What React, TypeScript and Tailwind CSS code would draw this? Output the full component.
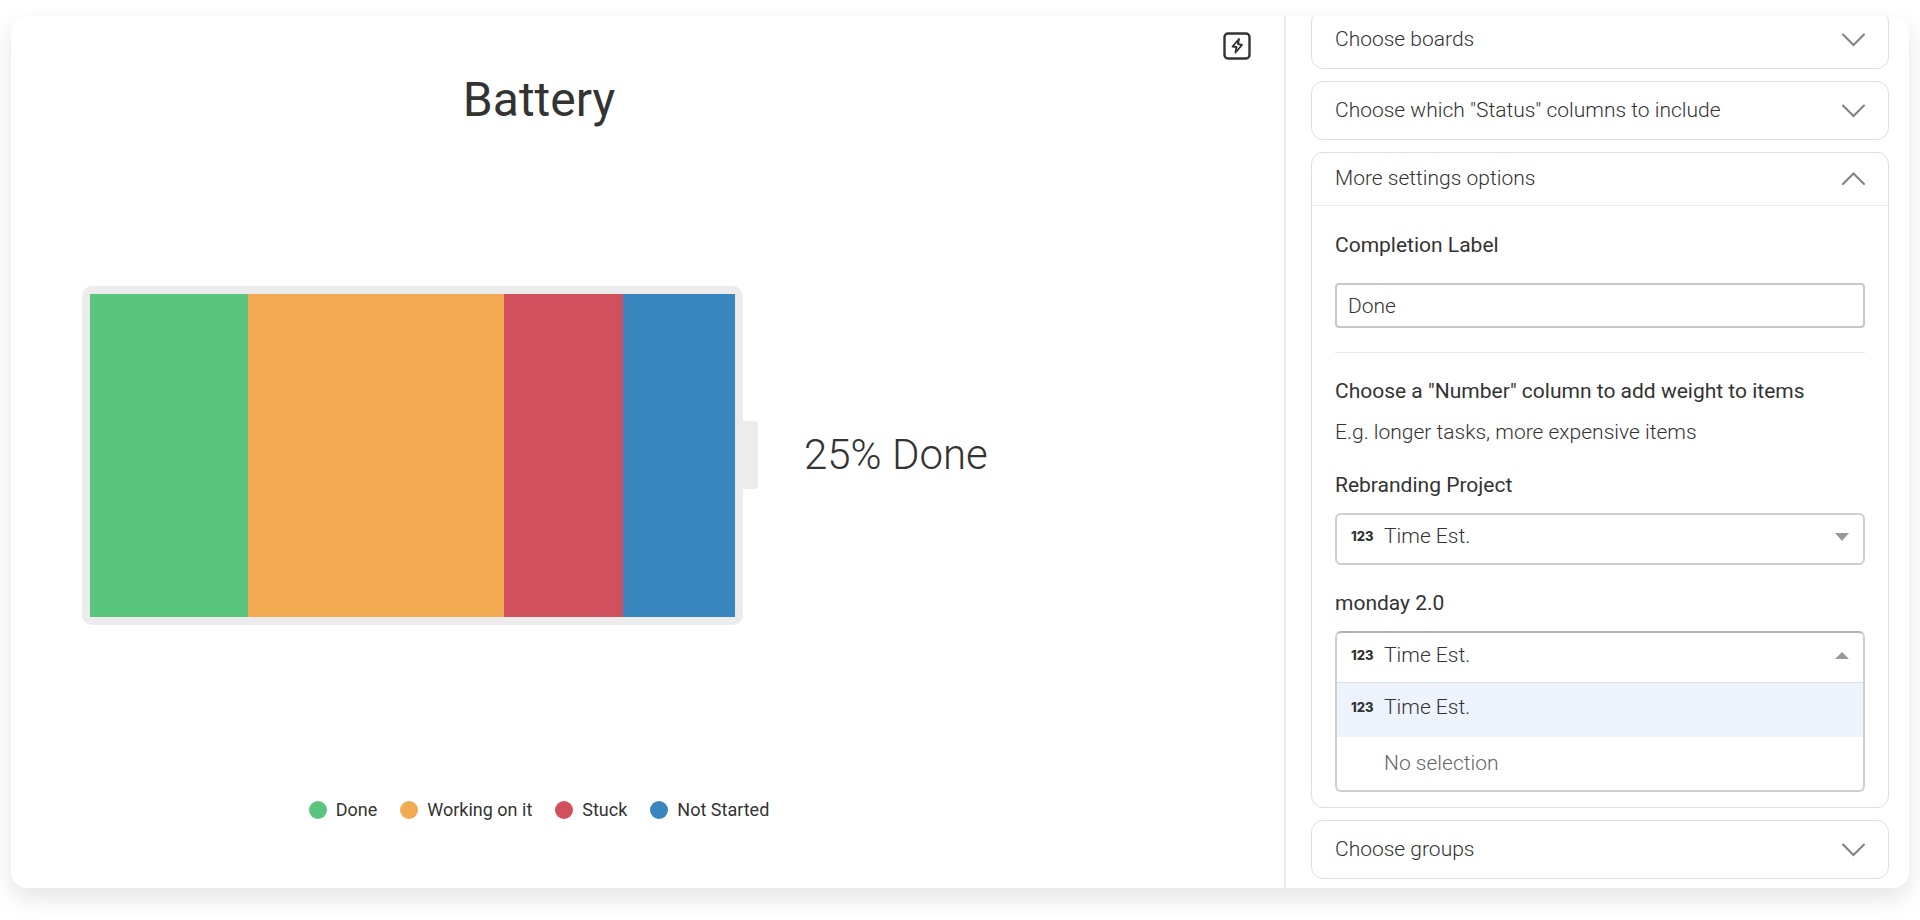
import { useState } from 'react';

const statuses = [
  { label: 'Done', weight: 158, color: 'bg-[#5ac57d]' },
  { label: 'Working on it', weight: 257, color: 'bg-[#f2ab53]' },
  { label: 'Stuck', weight: 119, color: 'bg-[#d0505d]' },
  { label: 'Not Started', weight: 112, color: 'bg-[#3985bd]' },
];

function Chevron({ up = false }: { up?: boolean }) {
  return (
    <svg className="h-4 w-6" viewBox="0 0 24 16" fill="none" stroke="#808080" strokeWidth="2" strokeLinecap="round">
      {up ? <path d="M2 13 12.500 2.500 23 13" /> : <path d="M2 2.500 12.500 13 23 2.500" />}
    </svg>
  );
}

function Caret({ up = false }: { up?: boolean }) {
  return (
    <svg className="h-2 w-[14px]" viewBox="0 0 14 8" fill="#999">
      {up ? <path d="M0 7h14L7 0z" /> : <path d="M0 0h14L7 8z" />}
    </svg>
  );
}

function Section({ title }: { title: string }) {
  return (
    <section className="shrink-0 rounded-xl border border-[#dedee9]">
      <button type="button" className="flex h-[57px] w-full items-center justify-between px-[23px] pt-px text-left">
        {title}
        <Chevron />
      </button>
    </section>
  );
}

function ColumnValue() {
  return (
    <span className="flex items-center text-left">
      <span className="w-[33px] font-[Inter] text-[13px] font-extrabold text-[#333]">123</span>
      Time Est.
    </span>
  );
}

export default function App() {
  const [label, setLabel] = useState('Done');

  return (
    <div className="h-screen bg-white px-[11px] pt-4 pb-8 font-[Roboto,sans-serif] text-[21px] font-light text-[#333]">
      <div className="flex h-full overflow-hidden rounded-2xl bg-white shadow-[0_10px_24px_rgba(0,0,0,0.11)]">
        <main className="flex flex-1 flex-col pl-[71px]">
          <div className="flex h-[60px] shrink-0 justify-end pt-4 pr-[33px]">
            <button type="button" aria-label="Automations" className="h-7 w-7">
              <svg viewBox="0 0 28 28" fill="none" stroke="#333" strokeWidth="2.400" strokeLinejoin="round">
                <rect x="1.500" y="1.500" width="25" height="25" rx="3.500" />
                <path d="M16 7 9.500 14.500l4 .5-1 5.500L19 13l-4-1z" strokeWidth="1.900" />
              </svg>
            </button>
          </div>
          <h1 className="w-[914px] text-center text-5xl leading-[48px] font-normal">Battery</h1>

          {/* Battery */}
          <div className="flex flex-1 items-center pb-3">
            <div className="flex h-[339px] w-[661px] rounded-[10px] bg-[#ececec] p-2">
              {statuses.map((s) => (
                <div key={s.label} className={s.color} style={{ flexGrow: s.weight }} />
              ))}
            </div>
            <div className="h-[68px] w-[15px] rounded-r bg-[#ececec]" />
            <p className="ml-[46px] text-[42px] leading-[48px]">25% Done</p>
          </div>

          <ul className="mb-[66px] flex w-[914px] justify-center gap-[23px] text-lg leading-6 font-normal">
            {statuses.map((s) => (
              <li key={s.label} className="flex items-center gap-[9px]">
                <span className={`h-[18px] w-[18px] rounded-full ${s.color}`} />
                {s.label}
              </li>
            ))}
          </ul>
        </main>

        <aside className="flex w-[625px] flex-col justify-end gap-3 border-l-2 border-[#ebebf2] pr-5 pb-[9px] pl-[25px]">
          <Section title="Choose boards" />
          <Section title={'Choose which "Status" columns to include'} />

          <section className="shrink-0 rounded-xl border border-[#dedee9]">
            <button
              type="button"
              className="flex h-[53px] w-full items-center justify-between border-b border-[#e8e8ec] px-[23px] text-left"
            >
              More settings options
              <Chevron up />
            </button>
            <div className="px-[23px] pt-[25px] pb-[15px]">
              <label htmlFor="completion" className="block leading-7 font-normal">
                Completion Label
              </label>
              <input
                id="completion"
                value={label}
                onChange={(e) => setLabel(e.target.value)}
                className="mt-6 block h-[45px] w-full rounded border-2 border-[#c8c8c8] px-[11px] outline-none"
              />
              <hr className="mt-6 border-t border-[#e8e8ec]" />

              <h2 className="mt-6 leading-7 font-normal">Choose a "Number" column to add weight to items</h2>
              <p className="mt-[13px] leading-7">E.g. longer tasks, more expensive items</p>

              <h3 className="mt-[25px] leading-7 font-normal">Rebranding Project</h3>
              <button
                type="button"
                aria-haspopup="listbox"
                className="mt-[14px] flex h-[52px] w-full items-center justify-between rounded-md border-2 border-[#cfcfcf] px-[14px] pb-1"
              >
                <ColumnValue />
                <Caret />
              </button>

              <h3 className="mt-6 leading-7 font-normal">monday 2.0</h3>
              <div className="mt-[14px] rounded-md border-2 border-[#cfcfcf] border-t-[#b3b3b3]">
                <button
                  type="button"
                  aria-haspopup="listbox"
                  aria-expanded="true"
                  className="flex h-[50px] w-full items-center justify-between border-b border-[#e0e0e0] px-[14px] pb-1"
                >
                  <ColumnValue />
                  <Caret up />
                </button>
                <ul role="listbox">
                  <li role="option" aria-selected="true" className="flex h-[54px] items-center bg-[#edf4fe] px-[14px] pb-1">
                    <ColumnValue />
                  </li>
                  <li role="option" aria-selected="false" className="flex h-[53px] items-center px-[47px] text-[#666]">
                    No selection
                  </li>
                </ul>
              </div>
            </div>
          </section>

          <Section title="Choose groups" />
        </aside>
      </div>
    </div>
  );
}
